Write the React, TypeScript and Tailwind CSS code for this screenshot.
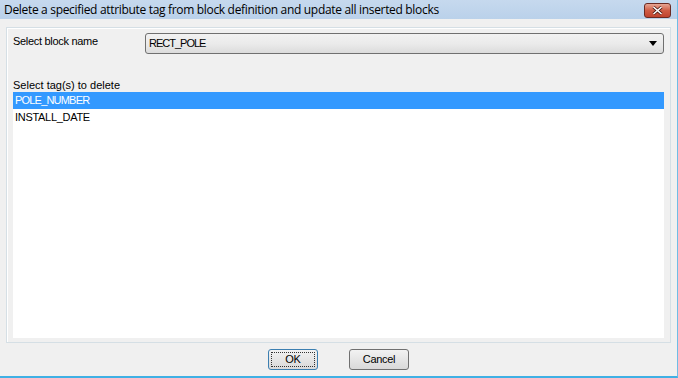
import React from 'react';

const ui = { fontFamily: '"Liberation Sans", Arial, sans-serif' };

export default function App() {
  return (
    <div
      className="w-[678px] h-[378px] flex flex-col bg-[#f0f0f0] border-r border-[#6fbde6] border-b-2 border-b-[#3fb0e4] overflow-hidden"
      style={ui}
    >
      {/* title bar */}
      <div className="h-[19px] flex items-center justify-between pl-[4px] pr-[6px] bg-gradient-to-b from-[#c6d9ee] to-[#bad1ea]">
        <span
          className="text-[12px] text-black tracking-[-0.32px]"
          style={{ fontFamily: '"Open Sans", "Noto Sans", sans-serif' }}
        >
          Delete a specified attribute tag from block definition and update all inserted blocks
        </span>
        <button className="w-[27px] h-[15px] mt-[1px] rounded-[3px] border border-[#6b2a22] bg-gradient-to-b from-[#e6a593] via-[#cf5c45] to-[#c0432e] flex items-center justify-center">
          <svg width="11" height="9" viewBox="0 0 11 9">
            <path d="M1.5 1 L9.5 8 M9.5 1 L1.5 8" stroke="#4a1a14" strokeWidth="3" />
            <path d="M1.5 1 L9.5 8 M9.5 1 L1.5 8" stroke="#ffffff" strokeWidth="1.6" />
          </svg>
        </button>
      </div>

      {/* body */}
      <div className="flex-1 flex flex-col px-[6px] pt-[8px]">
        <div className="h-[316px] flex flex-col border border-[#d5dfe5] shadow-[inset_1px_1px_0_#ffffff] px-[6px] pt-[4px] pb-[4px]">
          <div className="flex items-start">
            <span className="w-[132px] text-[11px] text-black tracking-[-0.3px] pt-[1px]">Select block name</span>
            <div className="flex-1 h-[21px] mt-[1px] rounded-[3px] border border-[#707070] bg-gradient-to-b from-[#f2f2f2] via-[#ebebeb] to-[#dcdcdc] flex items-center justify-between pl-[3px] pr-[6px]">
              <span className="text-[11px] text-black tracking-[-1px]">RECT_POLE</span>
              <svg width="8" height="5" viewBox="0 0 8 5">
                <path d="M0 0 H8 L4 5 Z" fill="#000" />
              </svg>
            </div>
          </div>
          <span className="mt-[24px] text-[11px] leading-[14px] text-black">Select tag(s) to delete</span>
          <div className="flex-1 bg-white flex flex-col">
            <div className="h-[17px] bg-[#3399ff] text-white text-[11px] tracking-[-0.8px] flex items-center pl-[2px]">
              POLE_NUMBER
            </div>
            <div className="h-[17px] text-black text-[11px] tracking-[-0.3px] flex items-center pl-[2px]">
              INSTALL_DATE
            </div>
          </div>
        </div>

        <div className="flex-1 flex items-center justify-center gap-[31px] pb-[1px]">
          <button className="w-[50px] h-[21px] rounded-[3px] border border-[#3c7fb1] bg-gradient-to-b from-[#f2f2f2] to-[#d9d9d9] text-[11px] text-black tracking-[-0.3px] p-[2px]">
            <span className="block h-full w-full border border-dotted border-[#333] flex items-center justify-center">OK</span>
          </button>
          <button className="w-[60px] h-[21px] rounded-[3px] border border-[#707070] bg-gradient-to-b from-[#f2f2f2] to-[#d9d9d9] text-[11px] text-black tracking-[-0.3px]">
            Cancel
          </button>
        </div>
      </div>
    </div>
  );
}
